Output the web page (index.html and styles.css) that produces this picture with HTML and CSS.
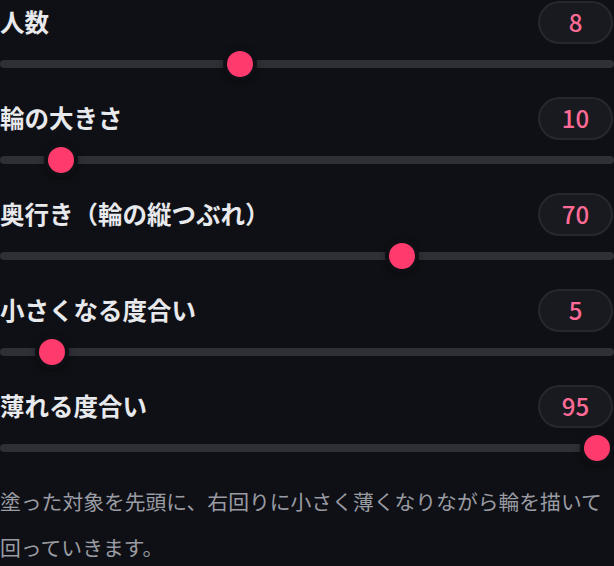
FILE: index.html
```html
<!DOCTYPE html>
<html lang="ja">
<head>
<meta charset="utf-8">
<link rel="stylesheet" href="styles.css">
</head>
<body>
<div class="panel">
  <div class="field">
    <div class="head"><span class="label">人数</span><span class="value">8</span></div>
    <div class="slider"><div class="track"></div><div class="thumb" style="left:227px"></div></div>
  </div>
  <div class="field">
    <div class="head"><span class="label">輪の大きさ</span><span class="value">10</span></div>
    <div class="slider"><div class="track"></div><div class="thumb" style="left:48px"></div></div>
  </div>
  <div class="field">
    <div class="head"><span class="label">奥行き（輪の縦つぶれ）</span><span class="value">70</span></div>
    <div class="slider"><div class="track"></div><div class="thumb" style="left:389px"></div></div>
  </div>
  <div class="field">
    <div class="head"><span class="label">小さくなる度合い</span><span class="value">5</span></div>
    <div class="slider"><div class="track"></div><div class="thumb" style="left:39px"></div></div>
  </div>
  <div class="field">
    <div class="head"><span class="label">薄れる度合い</span><span class="value">95</span></div>
    <div class="slider"><div class="track"></div><div class="thumb" style="left:584px"></div></div>
  </div>
  <p class="desc">塗った対象を先頭に、右回りに小さく薄くなりながら輪を描いて回っていきます。</p>
</div>
</body>
</html>
```

FILE: styles.css
```css
html, body {
  margin: 0;
  padding: 0;
  background: #0f1015;
}
body {
  width: 614px;
  height: 566px;
  overflow: hidden;
  font-family: "Noto Sans CJK JP", "Noto Sans", sans-serif;
}
.panel {
  display: flex;
  flex-direction: column;
  gap: 19px;
}
.field {
  display: flex;
  flex-direction: column;
  gap: 7px;
}
.head {
  height: 44px;
  display: flex;
  align-items: center;
  justify-content: space-between;
}
.label {
  font-size: 24.5px;
  font-weight: 700;
  color: #e8e9ec;
  line-height: 1;
  padding-top: 1px;
}
.value {
  box-sizing: border-box;
  width: 75px;
  height: 43px;
  margin-right: 1px;
  border: 2px solid #26282e;
  border-radius: 22px;
  background: #181a20;
  color: #ff6b96;
  font-size: 24px;
  font-weight: 500;
  display: flex;
  align-items: center;
  justify-content: center;
  line-height: 1;
}
.slider {
  position: relative;
  height: 26px;
  display: flex;
  align-items: center;
}
.track {
  flex: 1;
  height: 8px;
  border-radius: 4px;
  background: #2f3036;
}
.thumb {
  position: absolute;
  top: 0;
  width: 26px;
  height: 26px;
  border-radius: 50%;
  background: #ff3b6e;
  box-shadow: 0 0 0 4px #0f1015, 0 2px 6px 4px rgba(0, 0, 0, 0.35);
}
.desc {
  margin: -2px 0 0;
  font-size: 20.8px;
  line-height: 46px;
  color: #9a9ca4;
}
```
